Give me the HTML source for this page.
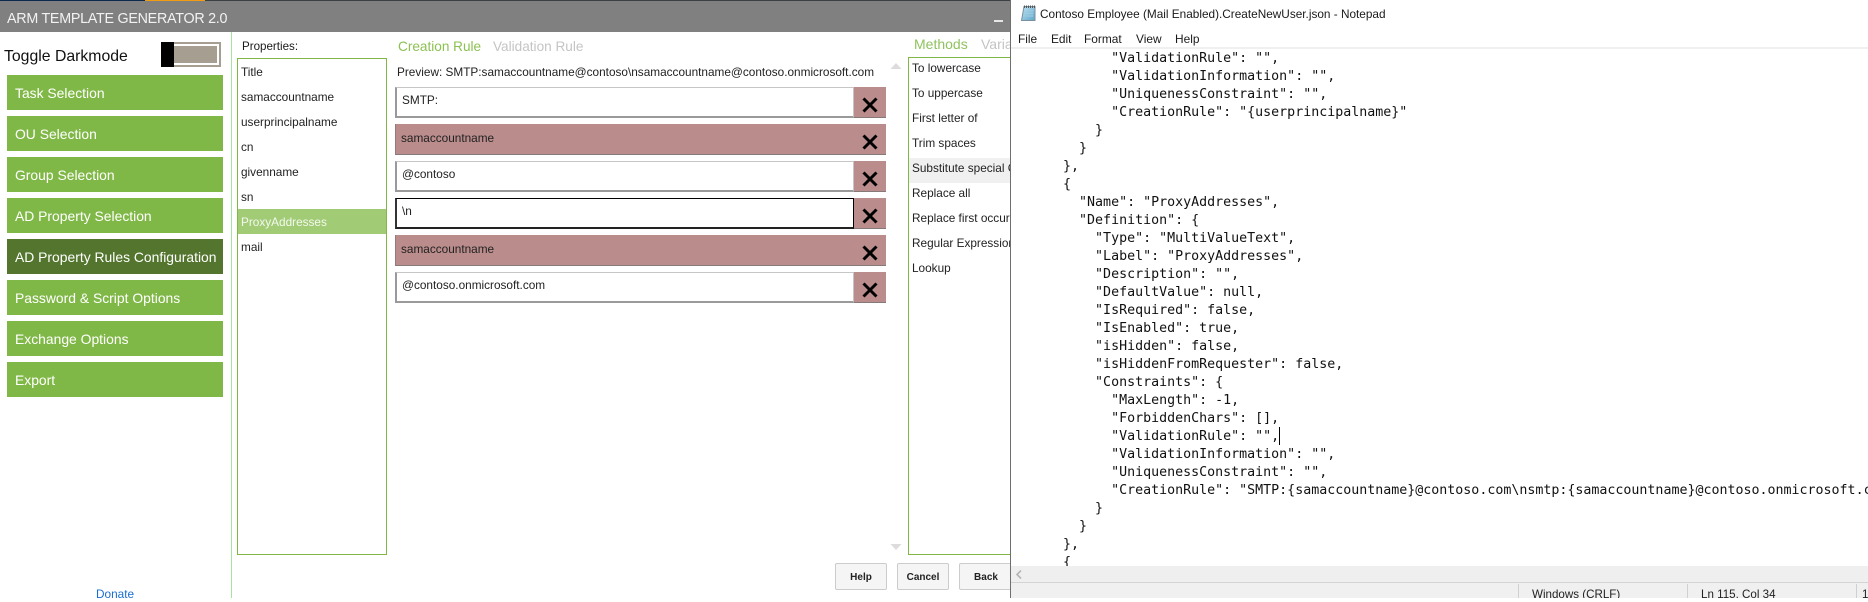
<!DOCTYPE html>
<html lang="en">
<head>
<meta charset="utf-8">
<title>ARM Template Generator</title>
<style>
html,body{margin:0;padding:0;background:#fff;}
body{position:relative;width:1868px;height:598px;overflow:hidden;font-family:"Liberation Sans",sans-serif;color:#1a1a1a;}
.a{position:absolute;}
.t{position:absolute;white-space:pre;line-height:16px;}
.btn{position:absolute;left:7px;width:216px;height:35px;background:#80b847;color:#fff;font-size:13.9px;line-height:37px;text-indent:8px;white-space:pre;overflow:hidden;}
.btn.sel{background:#53752d;}
.li{position:absolute;height:25px;line-height:27px;font-size:11.8px;white-space:pre;color:#222;}
.box{position:absolute;left:395px;width:459px;height:31px;box-sizing:border-box;background:#fff;border:1px solid #c6c6c6;border-left:2px solid #9a9a9a;border-bottom:2px solid #9a9a9a;font-size:11.8px;line-height:25px;padding-left:5px;color:#222;white-space:pre;}
.box.f{border:1px solid #000;border-left:2px solid #333;border-bottom:2px solid #222;}
.box.r{width:459px;background:#bb8c8c;border:0;border-bottom:1px solid #85797a;border-left:1px solid #8f7d7d;padding-left:5px;line-height:28px;}
.x{position:absolute;left:854px;width:32px;height:31px;background:#bb8c8c;box-sizing:border-box;border-bottom:1px solid #85797a;}
.x svg{position:absolute;left:8px;top:10px;}
.foot{position:absolute;top:563px;height:27px;box-sizing:border-box;background:#f5f5f5;border:1px solid #ccc;border-radius:2px;font-size:10px;font-weight:bold;line-height:27px;text-align:center;color:#222;}
#np{position:absolute;left:1010px;top:0;width:858px;height:598px;background:#fff;border-left:1px solid #6f6f6f;overflow:hidden;}
#code{position:absolute;left:4px;top:50px;margin:0;font-family:"DejaVu Sans Mono","Liberation Mono",monospace;font-size:13.3px;line-height:18px;color:#111;white-space:pre;}
.m{position:absolute;top:31px;font-size:11.9px;line-height:16px;color:#1a1a1a;}
.st{position:absolute;top:588px;font-size:11.6px;line-height:14px;color:#222;white-space:pre;}
</style>
</head>
<body>
<!-- top strip and title bar -->
<div class="a" style="left:0;top:0;width:1010px;height:1px;background:#3c3f44;"></div>
<div class="a" style="left:0;top:0;width:145px;height:1px;background:#0b2a4d;"></div>
<div class="a" style="left:145px;top:0;width:60px;height:1px;background:#f39c12;"></div>
<div class="a" style="left:0;top:1px;width:1010px;height:31px;background:#808080;"></div>
<div class="t" style="left:7px;top:11px;font-size:14.3px;letter-spacing:-.26px;color:#f2f2f2;">ARM TEMPLATE GENERATOR 2.0</div>
<div class="a" style="left:994px;top:20px;width:9px;height:2px;background:#e6e6e6;"></div>

<!-- sidebar -->
<div class="a" style="left:231px;top:32px;width:1px;height:566px;background:#a6e3a1;"></div>
<div class="t" style="left:4px;top:49px;font-size:15.8px;color:#111;">Toggle Darkmode</div>
<div class="a" style="left:161px;top:42px;width:60px;height:25px;background:#a59e91;"></div>
<div class="a" style="left:174px;top:44px;width:45px;height:21px;background:#fff;"></div>
<div class="a" style="left:174px;top:46px;width:43px;height:17px;background:#a59e91;"></div>
<div class="a" style="left:161px;top:42px;width:13px;height:25px;background:#000;"></div>

<div class="btn" style="top:75px;">Task Selection</div>
<div class="btn" style="top:116px;">OU Selection</div>
<div class="btn" style="top:157px;">Group Selection</div>
<div class="btn" style="top:198px;">AD Property Selection</div>
<div class="btn sel" style="top:239px;">AD Property Rules Configuration</div>
<div class="btn" style="top:280px;">Password &amp; Script Options</div>
<div class="btn" style="top:321px;">Exchange Options</div>
<div class="btn" style="top:362px;">Export</div>
<div class="t" style="left:96px;top:586px;font-size:11.8px;color:#1a6ed0;">Donate</div>

<!-- properties -->
<div class="t" style="left:242px;top:38.5px;font-size:11.6px;">Properties:</div>
<div class="a" style="left:237px;top:58px;width:150px;height:497px;box-sizing:border-box;border:1px solid #80b847;background:#fff;"></div>
<div class="a" style="left:238px;top:209px;width:148px;height:25px;background:#a2cb76;"></div>
<div class="li" style="left:241px;top:59px;">Title</div>
<div class="li" style="left:241px;top:84px;">samaccountname</div>
<div class="li" style="left:241px;top:109px;">userprincipalname</div>
<div class="li" style="left:241px;top:134px;">cn</div>
<div class="li" style="left:241px;top:159px;">givenname</div>
<div class="li" style="left:241px;top:184px;">sn</div>
<div class="li" style="left:241px;top:209px;color:#f4f8ee;">ProxyAddresses</div>
<div class="li" style="left:241px;top:234px;">mail</div>

<!-- rule editor -->
<div class="t" style="left:398px;top:39px;font-size:13.6px;color:#8cc152;">Creation Rule</div>
<div class="t" style="left:493px;top:39px;font-size:13.6px;color:#c4c4c4;">Validation Rule</div>
<div class="t" style="left:397px;top:64px;font-size:11.8px;color:#222;">Preview: SMTP:samaccountname@contoso\nsamaccountname@contoso.onmicrosoft.com</div>

<div class="box" style="top:87px;">SMTP:</div>
<div class="x" style="top:87px;"><svg width="16" height="16" viewBox="0 0 16 16"><path d="M1.5 1.5L14.5 14.5M14.5 1.5L1.5 14.5" stroke="#000" stroke-width="3" fill="none"/></svg></div>
<div class="box r" style="top:124px;">samaccountname</div>
<div class="x" style="top:124px;"><svg width="16" height="16" viewBox="0 0 16 16"><path d="M1.5 1.5L14.5 14.5M14.5 1.5L1.5 14.5" stroke="#000" stroke-width="3" fill="none"/></svg></div>
<div class="box" style="top:161px;">@contoso</div>
<div class="x" style="top:161px;"><svg width="16" height="16" viewBox="0 0 16 16"><path d="M1.5 1.5L14.5 14.5M14.5 1.5L1.5 14.5" stroke="#000" stroke-width="3" fill="none"/></svg></div>
<div class="box f" style="top:198px;">\n</div>
<div class="x" style="top:198px;"><svg width="16" height="16" viewBox="0 0 16 16"><path d="M1.5 1.5L14.5 14.5M14.5 1.5L1.5 14.5" stroke="#000" stroke-width="3" fill="none"/></svg></div>
<div class="box r" style="top:235px;">samaccountname</div>
<div class="x" style="top:235px;"><svg width="16" height="16" viewBox="0 0 16 16"><path d="M1.5 1.5L14.5 14.5M14.5 1.5L1.5 14.5" stroke="#000" stroke-width="3" fill="none"/></svg></div>
<div class="box" style="top:272px;">@contoso.onmicrosoft.com</div>
<div class="x" style="top:272px;"><svg width="16" height="16" viewBox="0 0 16 16"><path d="M1.5 1.5L14.5 14.5M14.5 1.5L1.5 14.5" stroke="#000" stroke-width="3" fill="none"/></svg></div>

<svg class="a" style="left:890px;top:62px;" width="12" height="8" viewBox="0 0 12 8"><path d="M0.5 7L6 1L11.5 7Z" fill="#dcdcdc"/></svg>
<svg class="a" style="left:890px;top:543px;" width="12" height="8" viewBox="0 0 12 8"><path d="M0.5 1L6 7L11.5 1Z" fill="#dcdcdc"/></svg>

<!-- methods -->
<div class="t" style="left:914px;top:36px;font-size:14px;color:#8fc35f;">Methods</div>
<div class="t" style="left:981px;top:36px;font-size:14px;color:#c4c4c4;">Variables</div>
<div class="a" style="left:908px;top:57px;width:110px;height:498px;box-sizing:border-box;border:1px solid #80b847;background:#fff;"></div>
<div class="a" style="left:909px;top:158px;width:101px;height:25px;background:#f0f0f0;"></div>
<div class="li" style="left:912px;top:55px;">To lowercase</div>
<div class="li" style="left:912px;top:80px;">To uppercase</div>
<div class="li" style="left:912px;top:105px;">First letter of</div>
<div class="li" style="left:912px;top:130px;">Trim spaces</div>
<div class="li" style="left:912px;top:155px;">Substitute special Characters</div>
<div class="li" style="left:912px;top:180px;">Replace all</div>
<div class="li" style="left:912px;top:205px;">Replace first occurance</div>
<div class="li" style="left:912px;top:230px;">Regular Expression</div>
<div class="li" style="left:912px;top:255px;">Lookup</div>

<div class="foot" style="left:835px;width:52px;">Help</div>
<div class="foot" style="left:897px;width:52px;">Cancel</div>
<div class="foot" style="left:959px;width:60px;padding-right:6px;">Back</div>

<!-- notepad -->
<div id="np">
  <svg class="a" style="left:9px;top:4px;" width="16" height="18" viewBox="0 0 16 18">
    <defs><linearGradient id="g" x1="0" y1="0" x2="1" y2="1"><stop offset="0" stop-color="#bfe3f3"/><stop offset="1" stop-color="#5fa6c9"/></linearGradient></defs>
    <path d="M4 2.5H15V16.5H1.5Z" fill="url(#g)" stroke="#7b8f9c" stroke-width="1"/>
    <path d="M4.5 1.5V4M6.5 1.5V4M8.5 1.5V4M10.5 1.5V4M12.5 1.5V4M14.5 1.5V4" stroke="#555" stroke-width="1"/>
    <path d="M4 7H13M3.5 9.5H13M3 12H13" stroke="#9fcde2" stroke-width="1"/>
  </svg>
  <div class="t" style="left:29px;top:6px;font-size:11.8px;color:#1a1a1a;">Contoso Employee (Mail Enabled).CreateNewUser.json - Notepad</div>
  <div class="m" style="left:7px;">File</div>
  <div class="m" style="left:40px;">Edit</div>
  <div class="m" style="left:73px;">Format</div>
  <div class="m" style="left:125px;">View</div>
  <div class="m" style="left:164px;">Help</div>
  <div class="a" style="left:0;top:47px;width:858px;height:2px;background:#f0f0f0;"></div>
<pre id="code">            "ValidationRule": "",
            "ValidationInformation": "",
            "UniquenessConstraint": "",
            "CreationRule": "{userprincipalname}"
          }
        }
      },
      {
        "Name": "ProxyAddresses",
        "Definition": {
          "Type": "MultiValueText",
          "Label": "ProxyAddresses",
          "Description": "",
          "DefaultValue": null,
          "IsRequired": false,
          "IsEnabled": true,
          "isHidden": false,
          "isHiddenFromRequester": false,
          "Constraints": {
            "MaxLength": -1,
            "ForbiddenChars": [],
            "ValidationRule": "",
            "ValidationInformation": "",
            "UniquenessConstraint": "",
            "CreationRule": "SMTP:{samaccountname}@contoso.com\nsmtp:{samaccountname}@contoso.onmicrosoft.com",
          }
        }
      },
      {</pre>
  <div class="a" style="left:268px;top:427px;width:1px;height:18px;background:#000;"></div>
  <div class="a" style="left:0;top:566px;width:858px;height:16px;background:#efefef;"></div>
  <svg class="a" style="left:4px;top:570px;" width="8" height="9" viewBox="0 0 8 9"><path d="M6 0.5L2 4.5L6 8.5" stroke="#b5b5b5" stroke-width="1.6" fill="none"/></svg>
  <div class="a" style="left:0;top:582px;width:858px;height:1px;background:#d4d4d4;"></div>
  <div class="a" style="left:0;top:583px;width:858px;height:15px;background:#f0f0f0;"></div>
  <div class="a" style="left:507px;top:584px;width:1px;height:14px;background:#d0d0d0;"></div>
  <div class="a" style="left:676px;top:584px;width:1px;height:14px;background:#d0d0d0;"></div>
  <div class="a" style="left:845px;top:584px;width:1px;height:14px;background:#d0d0d0;"></div>
  <div class="st" style="left:521px;">Windows (CRLF)</div>
  <div class="st" style="left:690px;">Ln 115, Col 34</div>
  <div class="st" style="left:851px;">100%</div>
</div>
</body>
</html>
